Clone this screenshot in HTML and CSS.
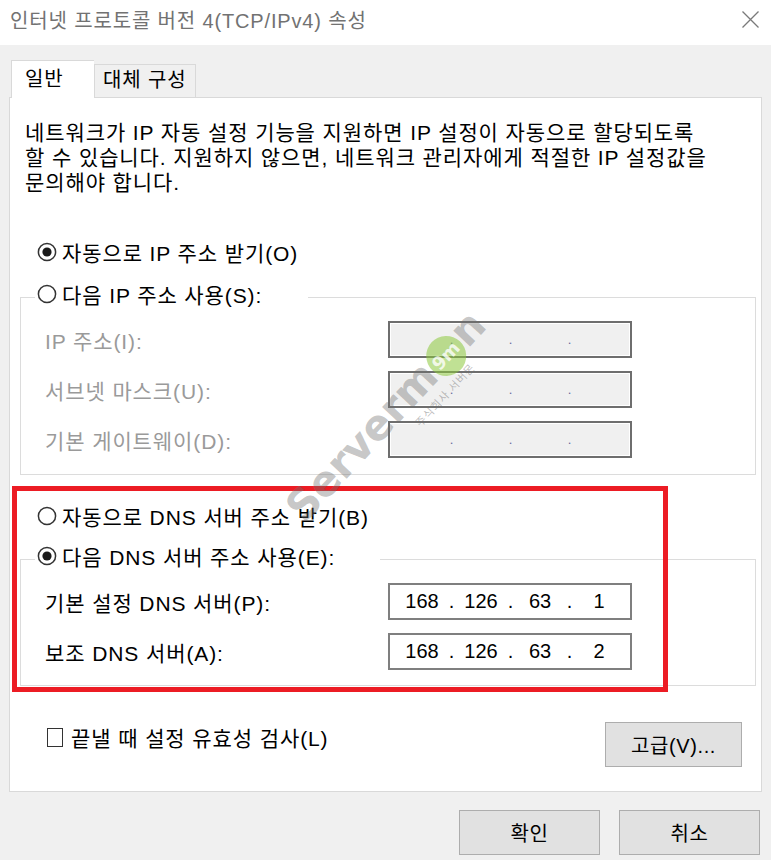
FILE: index.html
```html
<!DOCTYPE html>
<html lang="ko">
<head>
  <meta charset="UTF-8">
  <title>인터넷 프로토콜 버전 4(TCP/IPv4) 속성</title>
  <link rel="stylesheet" href="styles.css">
</head>
<body>

<div class="dialog">
  <div class="titlebar">
    <span class="title">인터넷 프로토콜 버전 4(TCP/IPv4) 속성</span>
    <svg class="close" width="17" height="17" viewBox="0 0 17 17">
      <path d="M0.5 0.5 L16.5 16.5 M16.5 0.5 L0.5 16.5" stroke="#7a7a7a" stroke-width="1.3" fill="none"/>
    </svg>
  </div>

  <div class="tabs">
    <div class="tab active">일반</div>
    <div class="tab">대체 구성</div>
  </div>

  <div class="panel">
    <p class="intro">네트워크가 IP 자동 설정 기능을 지원하면 IP 설정이 자동으로 할당되도록<br>할 수 있습니다. 지원하지 않으면, 네트워크 관리자에게 적절한 IP 설정값을<br>문의해야 합니다.</p>

    <div class="radio-row top">
      <svg class="radio" width="20" height="20" viewBox="0 0 20 20"><circle cx="10" cy="10" r="8.6" fill="#fff" stroke="#333" stroke-width="1.5"/><circle cx="10" cy="10" r="4.6" fill="#1a1a1a"/></svg>
      <span>자동으로 IP 주소 받기(O)</span>
    </div>

    <fieldset class="group disabled">
      <legend class="radio-row legend-ip">
        <svg class="radio" width="20" height="20" viewBox="0 0 20 20"><circle cx="10" cy="10" r="8.6" fill="#fff" stroke="#333" stroke-width="1.5"/></svg>
        <span>다음 IP 주소 사용(S):</span>
      </legend>
      <div class="field-row">
        <span class="label">IP 주소(I):</span>
        <div class="ip-box"><span></span><i>.</i><span></span><i>.</i><span></span><i>.</i><span></span></div>
      </div>
      <div class="field-row">
        <span class="label">서브넷 마스크(U):</span>
        <div class="ip-box"><span></span><i>.</i><span></span><i>.</i><span></span><i>.</i><span></span></div>
      </div>
      <div class="field-row">
        <span class="label">기본 게이트웨이(D):</span>
        <div class="ip-box"><span></span><i>.</i><span></span><i>.</i><span></span><i>.</i><span></span></div>
      </div>
    </fieldset>

    <div class="dns">
      <div class="radio-row dns-auto">
        <svg class="radio" width="20" height="20" viewBox="0 0 20 20"><circle cx="10" cy="10" r="8.6" fill="#fff" stroke="#333" stroke-width="1.5"/></svg>
        <span>자동으로 DNS 서버 주소 받기(B)</span>
      </div>

      <fieldset class="group dns-group">
        <legend class="radio-row legend-dns">
          <svg class="radio" width="20" height="20" viewBox="0 0 20 20"><circle cx="10" cy="10" r="8.6" fill="#fff" stroke="#333" stroke-width="1.5"/><circle cx="10" cy="10" r="4.6" fill="#1a1a1a"/></svg>
          <span>다음 DNS 서버 주소 사용(E):</span>
        </legend>
        <div class="field-row">
          <span class="label">기본 설정 DNS 서버(P):</span>
          <div class="ip-box"><span>168</span><i>.</i><span>126</span><i>.</i><span>63</span><i>.</i><span>1</span></div>
        </div>
        <div class="field-row">
          <span class="label">보조 DNS 서버(A):</span>
          <div class="ip-box"><span>168</span><i>.</i><span>126</span><i>.</i><span>63</span><i>.</i><span>2</span></div>
        </div>
      </fieldset>

      <div class="highlight"></div>
    </div>

    <div class="bottom-row">
      <label class="check">
        <span class="box"></span>
        <span>끝낼 때 설정 유효성 검사(L)</span>
      </label>
      <button class="btn advanced">고급(V)...</button>
    </div>
  </div>

  <div class="footer">
    <button class="btn">확인</button>
    <button class="btn">취소</button>
  </div>

  <div class="watermark">
    <span class="wm-text">Serverm<b class="wm-o">9m</b>n</span>
    <span class="wm-sub">주식회사 서버몬</span>
  </div>
</div>

</body>
</html>
```

FILE: styles.css
```css
body {
  margin: 0;
  background: #f0f0f0;
  font-family: "Liberation Sans", "Noto Sans CJK KR", sans-serif;
  font-size: 21px;
  letter-spacing: 0.9px;
  color: #000;
}
.dialog {
  position: relative;
  width: 771px;
  height: 860px;
  overflow: hidden;
}
.titlebar {
  height: 45px;
  background: #fff;
  display: flex;
  align-items: center;
  justify-content: space-between;
  padding: 0 12px 0 10px;
  box-sizing: border-box;
}
.title {
  font-size: 20px;
  letter-spacing: 0.85px;
  color: #727272;
  margin-top: -6px;
}
.close {
  margin-top: -7px;
}
.tabs {
  display: flex;
  align-items: flex-end;
  padding-left: 11px;
  margin-top: 15px;
  height: 37px;
}
.tab {
  box-sizing: border-box;
  height: 33px;
  line-height: 31px;
  border: 1px solid #d9d9d9;
  border-bottom: none;
  padding-left: 8px;
  width: 102px;
  font-size: 20px;
}
.tab.active {
  width: 83px;
  height: 38px;
  line-height: 36px;
  padding-left: 13px;
  background: #fff;
  margin-bottom: -1px;
  position: relative;
  z-index: 1;
  border-right: none;
}
.panel {
  margin: 0 9px;
  height: 695px;
  box-sizing: border-box;
  background: #fff;
  border: 1px solid #d9d9d9;
  padding: 0 5px 0 10px;
}
.intro {
  margin: 22px 0 0 5px;
  line-height: 25px;
  white-space: nowrap;
}
.radio-row {
  display: flex;
  align-items: center;
  height: 30px;
}
.radio-row span {
  margin-left: 5px;
}
.radio-row.top {
  margin: 42px 0 0 17px;
}
.group {
  margin: 12px 0 0 0;
  padding: 6px 24px 16px 24px;
  border: 1px solid #dcdcdc;
  min-width: 0;
}
.group legend {
  margin-left: -10px;
  padding: 0 0 6px 2px;
  box-sizing: content-box;
  height: 30px;
}
.legend-ip {
  width: 271px;
}
.legend-dns {
  width: 343px;
}
.field-row {
  display: grid;
  grid-template-columns: 343px 244px;
  align-items: center;
  height: 37px;
  margin-bottom: 13px;
}
.field-row:last-child {
  margin-bottom: 0;
}
.disabled .label {
  color: #9a9a9a;
}
.ip-box {
  box-sizing: border-box;
  height: 37px;
  border: 2px solid #7f7f7f;
  background: #fff;
  display: flex;
  align-items: center;
  padding-left: 4px;
  font-size: 20px;
  letter-spacing: 0;
}
.disabled .ip-box {
  background: #f0f0f0;
  border-color: #6e6e6e;
  box-shadow: inset 0 0 0 1px #fff;
}
.ip-box span {
  width: 56px;
  text-align: center;
}
.ip-box i {
  font-style: normal;
  width: 3px;
  display: flex;
  justify-content: center;
}
.disabled .ip-box i {
  color: #6a6a9a;
  font-size: 13px;
}
.dns {
  position: relative;
  padding-top: 26px;
}
.radio-row.dns-auto {
  margin-left: 17px;
}
.dns-group {
  margin-top: 10px;
  padding-bottom: 15px;
}
.highlight {
  position: absolute;
  left: -8px;
  top: 11px;
  width: 656px;
  height: 206px;
  box-sizing: border-box;
  border: 5px solid #ec1c24;
}
.bottom-row {
  display: flex;
  justify-content: space-between;
  margin: 36px 14px 0 27px;
  height: 45px;
}
.check {
  display: flex;
  align-items: center;
  height: 30px;
}
.check .box {
  width: 14px;
  height: 17px;
  border: 1.5px solid #333;
  margin-right: 8px;
}
.btn {
  width: 141px;
  height: 45px;
  background: #e1e1e1;
  border: 1px solid #adadad;
  font-family: "Liberation Sans", "Noto Sans CJK KR", sans-serif;
  font-size: 20px;
  letter-spacing: 0.6px;
  color: #000;
  padding: 0;
}
.btn.advanced {
  width: 137px;
}
.footer {
  display: flex;
  justify-content: flex-end;
  gap: 19px;
  margin-top: 18px;
  padding-right: 11px;
}
.watermark {
  position: absolute;
  left: 298px;
  top: 488px;
  transform: rotate(-47deg);
  transform-origin: left center;
  pointer-events: none;
}
.wm-text {
  display: block;
  font-family: "DejaVu Sans", sans-serif;
  font-weight: bold;
  font-size: 42px;
  letter-spacing: 0;
  color: rgba(110, 110, 110, 0.4);
}
.wm-o {
  display: inline-block;
  width: 40px;
  height: 40px;
  border-radius: 50%;
  background: rgba(140, 200, 60, 0.55);
  color: rgba(255, 255, 255, 0.8);
  font-size: 18px;
  line-height: 40px;
  text-align: center;
  vertical-align: middle;
}
.wm-sub {
  display: block;
  margin-left: 150px;
  margin-top: -4px;
  font-size: 11px;
  color: rgba(110, 110, 110, 0.45);
}
```
